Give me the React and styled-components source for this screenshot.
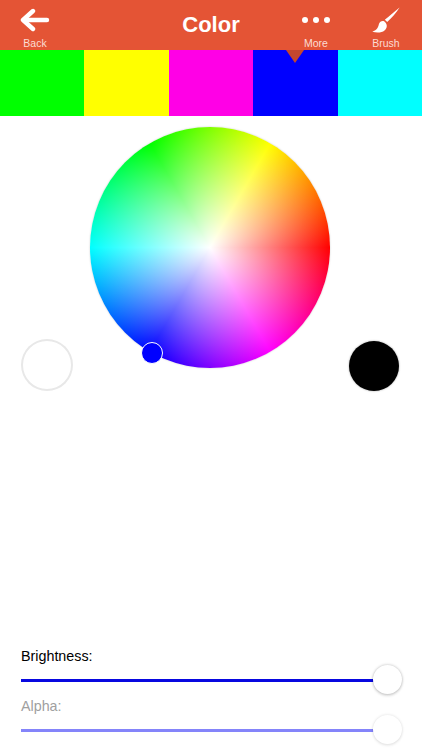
import styled, { createGlobalStyle } from 'styled-components';

const GlobalStyle = createGlobalStyle`
  html, body {
    margin: 0;
    padding: 0;
    background: #fff;
  }
  body {
    font-family: "Liberation Sans", Arial, sans-serif;
  }
`;

const Page = styled.div`
  width: 422px;
  height: 750px;
  display: flex;
  flex-direction: column;
  overflow: hidden;
  background: #fff;
`;

const Toolbar = styled.header`
  height: 50px;
  background: #e45435;
  display: grid;
  grid-template-columns: 70px 1fr 68px 72px;
  color: #fff;
`;

const ToolButton = styled.div`
  display: flex;
  flex-direction: column;
  align-items: center;
  justify-content: flex-end;
  font-size: 10.5px;
  line-height: 13px;
  color: #fbdcd4;
`;

const IconSlot = styled.div`
  height: 35px;
  display: flex;
  align-items: center;
  justify-content: center;
  margin-top: ${({ $nudge }) => $nudge || 0}px;
`;

const Title = styled.h1`
  margin: 0;
  padding-left: 70px;
  font-size: 22px;
  font-weight: 700;
  line-height: 49px;
  text-align: center;
`;

const Swatches = styled.div`
  height: 66px;
  display: grid;
  grid-template-columns: repeat(5, 1fr);
`;

const Swatch = styled.div`
  position: relative;
  background: ${({ $color }) => $color};
`;

const Pointer = styled.div`
  position: absolute;
  top: 0;
  left: 50%;
  margin-left: -9px;
  width: 0;
  height: 0;
  border-left: 9px solid transparent;
  border-right: 9px solid transparent;
  border-top: 13px solid #c4472e;
`;

const PickerRow = styled.section`
  display: grid;
  grid-template-columns: 1fr auto 1fr;
  align-items: end;
  padding: 11px 23px 0 21px;
`;

const Wheel = styled.div`
  position: relative;
  width: 240px;
  height: 241px;
  margin-bottom: 23px;
  border-radius: 50%;
  box-shadow: 0 0 2px rgba(0, 0, 0, 0.22);
  background:
    radial-gradient(circle closest-side, #fff 0%, rgba(255, 255, 255, 0) 100%),
    conic-gradient(from 90deg, #f00, #f0f, #00f, #0ff, #0f0, #ff0, #f00);
`;

const WheelHandle = styled.div`
  position: absolute;
  left: 50.5px;
  top: 215px;
  width: 22px;
  height: 22px;
  box-sizing: border-box;
  border-radius: 50%;
  background: #0000ff;
  border: 1.5px solid #fff;
`;

const ColorDot = styled.div`
  width: ${({ $size }) => $size}px;
  height: ${({ $size }) => $size}px;
  border-radius: 50%;
  box-sizing: border-box;
  background: ${({ $color }) => $color};
  box-shadow: ${({ $ring }) => $ring};
  justify-self: ${({ $side }) => $side};
`;

const Sliders = styled.section`
  margin-top: auto;
  padding: 0 35px 3px 21px;
  display: flex;
  flex-direction: column;
`;

const SliderLabel = styled.div`
  font-size: 14.3px;
  line-height: 18px;
  color: ${({ $color }) => $color};
`;

const SliderTrack = styled.div`
  position: relative;
  height: 2.5px;
  margin: 14px 0 15.5px;
  background: ${({ $color }) => $color};
`;

const Thumb = styled.div`
  position: absolute;
  right: -15px;
  top: -14px;
  width: 29px;
  height: 29px;
  border-radius: 50%;
  background: #fff;
  box-shadow: ${({ $shadow }) => $shadow};
`;

function BackIcon() {
  return (
    <svg width="30" height="24" viewBox="0 0 30 24" fill="none" stroke="#fff" strokeWidth="4.4" strokeLinecap="round" strokeLinejoin="round">
      <path d="M27 12H4" />
      <path d="M13 3L3 12l10 9" />
    </svg>
  );
}

function MoreIcon() {
  return (
    <svg width="30" height="8" viewBox="0 0 30 8" fill="#fff">
      <circle cx="4" cy="4" r="3" />
      <circle cx="15" cy="4" r="3" />
      <circle cx="26" cy="4" r="3" />
    </svg>
  );
}

function BrushIcon() {
  return (
    <svg width="28" height="26" viewBox="0 0 28 26" fill="#fff">
      <path d="M27.6 0.4C23 4.2 17 9.4 12.8 12.8l1.4 1.2 1 1C19 11.4 24.4 5.6 27.6 0.4z" />
      <path d="M11.6 14c-.9-.2-2.2-.1-3.2.7-1 .8-1.4 2-1.7 3.3-.5 2.2-1.6 4-3.4 5.2l-3 1.5c4.6 1.4 9.6 1 12.2-1.2 2-1.6 2.6-3.8 2.1-5.8-.3-.8-1.3-3.2-3-3.7z" />
    </svg>
  );
}

const swatchColors = ['#00ff00', '#ffff00', '#ff00e6', '#0000ff', '#00ffff'];

export default function App() {
  return (
    <Page>
      <GlobalStyle />
      <Toolbar>
        <ToolButton>
          <IconSlot><BackIcon /></IconSlot>
          Back
        </ToolButton>
        <Title>Color</Title>
        <ToolButton>
          <IconSlot $nudge={2}><MoreIcon /></IconSlot>
          More
        </ToolButton>
        <ToolButton>
          <IconSlot><BrushIcon /></IconSlot>
          Brush
        </ToolButton>
      </Toolbar>
      <Swatches>
        {swatchColors.map((color, i) => (
          <Swatch key={color} $color={color}>
            {i === 3 && <Pointer />}
          </Swatch>
        ))}
      </Swatches>
      <PickerRow>
        <ColorDot $size={52} $color="#fff" $ring="inset 0 0 0 2px #e8e8e8" $side="start" />
        <Wheel>
          <WheelHandle />
        </Wheel>
        <ColorDot $size={50} $color="#000" $ring="0 0 2px rgba(0, 0, 0, 0.4)" $side="end" />
      </PickerRow>
      <Sliders>
        <SliderLabel $color="#000">Brightness:</SliderLabel>
        <SliderTrack $color="#0808e0">
          <Thumb $shadow="0 0 3px rgba(0, 0, 0, 0.28), 0 2px 3px rgba(0, 0, 0, 0.1)" />
        </SliderTrack>
        <SliderLabel $color="#a0a0a0">Alpha:</SliderLabel>
        <SliderTrack $color="#8484fa">
          <Thumb $shadow="0 0 3px rgba(0, 0, 0, 0.14), 0 2px 3px rgba(0, 0, 0, 0.05)" />
        </SliderTrack>
      </Sliders>
    </Page>
  );
}
